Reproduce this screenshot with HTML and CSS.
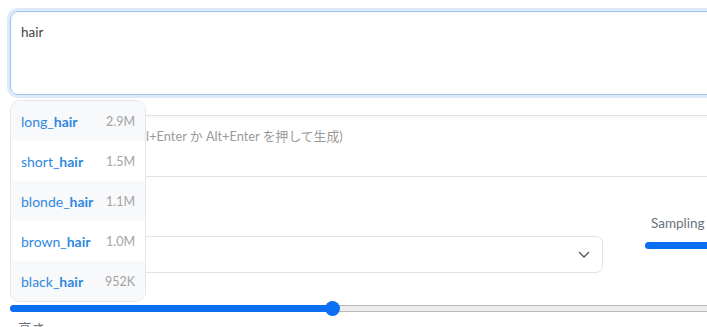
FILE: index.html
```html
<!DOCTYPE html>
<html lang="ja">
<head>
<meta charset="utf-8">
<link rel="stylesheet" href="styles.css">
</head>
<body>
<div class="page">
  <div class="prompt">hair</div>
  <div class="neg"><span class="ph"><span class="ph-pre">ネガティブプロンプト</span> (Ctrl+Enter か Alt+Enter を押して生成)</span></div>
  <div class="params">
    <div class="col">
      <div class="label">サンプリング方法</div>
      <div class="select">
        <span class="sel-val"></span>
        <svg class="chev" width="12" height="8" viewBox="0 0 12 8"><path d="M1.5 1.5 L6 6 L10.5 1.5" fill="none" stroke="#555" stroke-width="1.4" stroke-linecap="round" stroke-linejoin="round"/></svg>
      </div>
    </div>
    <div class="col right">
      <div class="label rlabel">Sampling steps</div>
      <div class="bar"></div>
    </div>
  </div>
  <div class="label wlabel">幅</div>
  <div class="range">
    <div class="fill"></div>
    <div class="thumb"></div>
  </div>
  <div class="label hlabel">高さ</div>

  <ul class="popup">
    <li class="item"><span class="tag">long_<b>hair</b></span><span class="cnt">2.9M</span></li>
    <li class="item"><span class="tag">short_<b>hair</b></span><span class="cnt">1.5M</span></li>
    <li class="item"><span class="tag">blonde_<b>hair</b></span><span class="cnt">1.1M</span></li>
    <li class="item"><span class="tag">brown_<b>hair</b></span><span class="cnt">1.0M</span></li>
    <li class="item"><span class="tag">black_<b>hair</b></span><span class="cnt">952K</span></li>
  </ul>
</div>
</body>
</html>
```
FILE: styles.css
```css
html, body {
  margin: 0;
  padding: 0;
  background: #fff;
  overflow: hidden;
}
body {
  font-family: Lato, "Noto Sans CJK JP", sans-serif;
  font-size: 13px;
  color: #444;
}
.page {
  position: relative;
  width: 900px;
  padding: 11px 0 0 10px;
  display: flex;
  flex-direction: column;
}
.prompt {
  border: 1px solid #9fc5ef;
  border-radius: 8px;
  box-shadow: 0 0 0 3px #dcebfa, inset 0 2px 3px rgba(0,0,0,0.04);
  padding: 12px 10px;
  box-sizing: border-box;
  height: 84px;
  font-size: 13.5px;
  color: #444;
  line-height: 16px;
}
.neg {
  margin-top: 20px;
  height: 62px;
  box-sizing: border-box;
  border: 1px solid #e2e2e2;
  border-radius: 8px;
  box-shadow: inset 0 2px 3px rgba(0,0,0,0.04);
  padding: 12px 10px;
  line-height: 16px;
  color: #9a9a9a;
  font-size: 12.8px;
}
.ph-pre {
  letter-spacing: -2.6px;
}
.params {
  margin-top: 37px;
  display: grid;
  grid-template-columns: 593px 1fr;
  column-gap: 35px;
}
.col {
  display: flex;
  flex-direction: column;
}
.label {
  color: #6b7280;
  font-size: 13.5px;
  line-height: 18px;
}
.rlabel {
  padding-left: 6px;
}
.select {
  margin-top: 4px;
  height: 37px;
  box-sizing: border-box;
  border: 1px solid #e3e3e3;
  border-radius: 7px;
  display: flex;
  align-items: center;
  justify-content: space-between;
  padding: 0 12px 0 10px;
  color: #444;
}
.chev {
  display: block;
}
.right {
  padding-left: 7px;
}
.bar {
  margin-top: 10px;
  height: 7px;
  border-radius: 4px;
  background: #0b6ff2;
}
.wlabel {
  margin-top: 8px;
}
.range {
  position: relative;
  margin-top: 6px;
  height: 7px;
  box-sizing: border-box;
  border: 1px solid #b9b9b9;
  border-radius: 4px;
  background: #ececec;
}
.fill {
  width: 322px;
  height: 7px;
  margin-top: -1px;
  margin-left: -1px;
  border-radius: 4px 0 0 4px;
  background: #0b6ff2;
}
.thumb {
  position: absolute;
  left: 314px;
  top: -5px;
  width: 15px;
  height: 15px;
  border-radius: 50%;
  background: #0b6ff2;
}
.hlabel {
  margin-top: 8px;
  padding-left: 8px;
}
.popup {
  position: absolute;
  left: 10px;
  top: 100px;
  width: 136px;
  margin: 0;
  padding: 0;
  list-style: none;
  box-sizing: border-box;
  border: 1px solid #e4e6ea;
  border-radius: 10px;
  background: #fff;
  overflow: hidden;
}
.item {
  height: 40px;
  display: flex;
  align-items: center;
  justify-content: space-between;
  padding: 0 10px;
}
.item:nth-child(odd) {
  background: #f8f9fb;
}
.tag {
  color: #2f88e0;
  font-size: 14px;
}
.tag b {
  font-weight: 700;
}
.cnt {
  color: #a3a3a3;
  font-size: 12.5px;
}
```
